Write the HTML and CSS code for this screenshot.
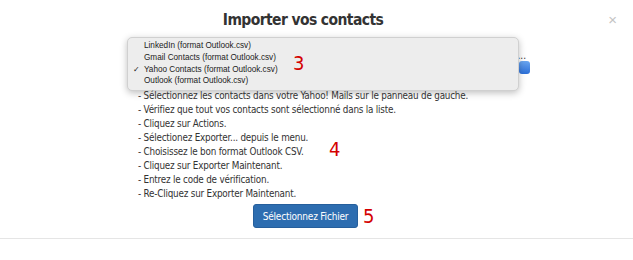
FILE: index.html
```html
<!DOCTYPE html>
<html lang="fr">
<head>
    <meta charset="UTF-8">
    <title>Importer vos contacts</title>
    <link rel="stylesheet" href="styles.css">
</head>
<body>
    <div class="modal">
        <div class="modal-header">
            <h3>Importer vos contacts</h3>
            <span class="close">&times;</span>
        </div>
        <div class="modal-body">
            <div class="source-row">
                <span class="source-label">Choisissez votre service pour l'import : Yahoo...</span>
                <span class="source-select"></span>
                <!-- liste ouverte du select -->
                <ul class="dropdown">
                    <li>LinkedIn (format Outlook.csv)</li>
                    <li>Gmail Contacts (format Outlook.csv)</li>
                    <li class="checked">Yahoo Contacts (format Outlook.csv)</li>
                    <li>Outlook (format Outlook.csv)</li>
                </ul>
                <span class="step step-3">3</span>
            </div>
            <div class="instructions">
                <p>- Sélectionnez les contacts dans votre Yahoo! Mails sur le panneau de gauche.</p>
                <p>- Vérifiez que tout vos contacts sont sélectionné dans la liste.</p>
                <p>- Cliquez sur Actions.</p>
                <p>- Sélectionez Exporter... depuis le menu.</p>
                <p>- Choisissez le bon format Outlook CSV.</p>
                <p>- Cliquez sur Exporter Maintenant.</p>
                <p>- Entrez le code de vérification.</p>
                <p>- Re-Cliquez sur Exporter Maintenant.</p>
                <span class="step step-4">4</span>
            </div>
            <div class="actions">
                <button class="btn">Sélectionnez Fichier</button>
                <span class="step step-5">5</span>
            </div>
        </div>
        <div class="modal-footer"></div>
    </div>
</body>
</html>
```

FILE: styles.css
```css
body {
    margin: 0;
    background-color: white;
    font-family: "DejaVu Sans Condensed", "DejaVu Sans", sans-serif;
    color: #333;
}
.modal {
    width: 633px;
}
.modal-header {
    position: relative;
    height: 36px;
    display: flex;
    align-items: center;
    justify-content: center;
}
.modal-header h3 {
    margin: 4px 0 0 -27px;
    font-size: 15.5px;
    letter-spacing: -0.6px;
    font-weight: bold;
    color: #333;
}
.close {
    position: absolute;
    right: 16px;
    top: 11px;
    font-size: 15px;
    color: #c4c4c4;
    font-family: "Liberation Sans", sans-serif;
}
.modal-body {
    padding: 0 0 0 138px;
}
.source-row {
    position: relative;
    height: 53px;
}
.source-label {
    position: absolute;
    right: 107px;
    top: 14px;
    font-size: 10px;
    white-space: nowrap;
}
.source-select {
    position: absolute;
    left: 381px;
    top: 25px;
    width: 11px;
    height: 13px;
    border-radius: 3px;
    background: linear-gradient(#6aa6f0, #2c6fd8);
}
.dropdown {
    position: absolute;
    left: -11px;
    top: 1px;
    width: 390px;
    margin: 0;
    padding: 2px 0 3px 0;
    list-style: none;
    background-color: #ededed;
    border: 1px solid #d0d0d0;
    border-radius: 5px;
    box-shadow: 0 2px 7px rgba(0, 0, 0, 0.25);
    font-family: "Liberation Sans", sans-serif;
    font-size: 8.2px;
    color: #222;
}
.dropdown li {
    position: relative;
    height: 11.8px;
    line-height: 11.8px;
    padding-left: 16px;
}
.dropdown li.checked::before {
    content: "\2713";
    position: absolute;
    left: 5px;
    font-size: 8px;
}
.step {
    position: absolute;
    color: #d40000;
    font-family: "DejaVu Sans Condensed", sans-serif;
    font-size: 20px;
    line-height: 1;
}
.step-3 {
    left: 155px;
    top: 17px;
}
.instructions {
    position: relative;
}
.instructions p {
    margin: 0;
    font-size: 9.8px;
    letter-spacing: -0.2px;
    line-height: 14px;
}
.step-4 {
    left: 191px;
    top: 50px;
}
.actions {
    position: relative;
    display: flex;
    justify-content: center;
    margin-left: -138px;
    padding: 3px 22px 0 0;
}
.btn {
    height: 24px;
    padding: 0 9px;
    background-color: #2d6db0;
    color: white;
    border: 1px solid #265f9c;
    border-radius: 3px;
    font-family: "DejaVu Sans Condensed", sans-serif;
    font-size: 10px;
    letter-spacing: -0.2px;
    cursor: pointer;
}
.step-5 {
    left: 363px;
    top: 5px;
}
.modal-footer {
    margin-top: 10px;
    border-top: 1px solid #e5e5e5;
}
```
